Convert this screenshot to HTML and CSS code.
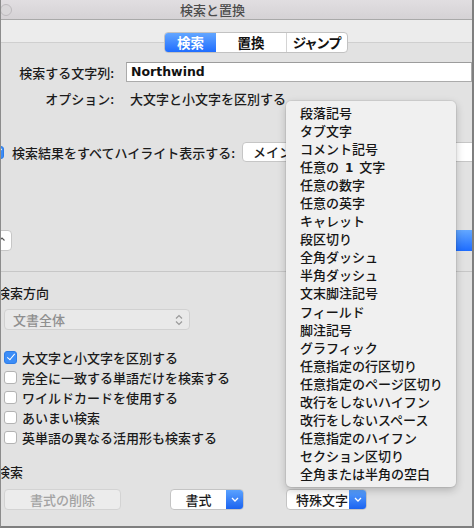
FILE: index.html
```html
<!DOCTYPE html>
<html lang="ja">
<head>
<meta charset="utf-8">
<title>検索と置換</title>
<link rel="stylesheet" href="styles.css">
</head>
<body>
<div class="window">
  <div class="titlebar">
    <span class="light"></span>
    <span class="title">検索と置換</span>
  </div>
  <div class="toolbar">
    <div class="seg">
      <span class="seg-item seg-find active">検索</span>
      <span class="seg-item seg-replace">置換</span>
      <span class="seg-item seg-jump">ジャンプ</span>
    </div>
  </div>
  <div class="content">
    <div class="row find-row">
      <span class="lbl">検索する文字列:</span>
      <div class="input">Northwind</div>
    </div>
    <div class="row opt-row">
      <span class="lbl">オプション:</span>
      <span class="opt-val">大文字と小文字を区別する</span>
    </div>
    <div class="row hl-row">
      <span class="cb checked cb-cut"></span>
      <span class="hl-text">検索結果をすべてハイライト表示する:</span>
      <div class="pop-btn">メイン文書</div>
    </div>
    <div class="row btn-row">
      <div class="small-btn"><svg width="6" height="4" viewBox="0 0 6 4"><path d="M0.5 3.5 L3 1 L5.5 3.5" fill="none" stroke="#555" stroke-width="1.1"/></svg></div>
      <div class="blue-btn"></div>
    </div>
    <div class="sep"></div>
    <div class="section-title">検索方向</div>
    <div class="select">
      <span>文書全体</span>
      <svg class="updown" width="8" height="12" viewBox="0 0 8 12"><path d="M1 4.5 L4 1.5 L7 4.5 M1 7.5 L4 10.5 L7 7.5" fill="none" stroke="#9a9a9a" stroke-width="1.2"/></svg>
    </div>
    <div class="checks">
      <div class="check-row"><span class="cb checked"></span><span>大文字と小文字を区別する</span></div>
      <div class="check-row"><span class="cb"></span><span>完全に一致する単語だけを検索する</span></div>
      <div class="check-row"><span class="cb"></span><span>ワイルドカードを使用する</span></div>
      <div class="check-row"><span class="cb"></span><span>あいまい検索</span></div>
      <div class="check-row"><span class="cb"></span><span>英単語の異なる活用形も検索する</span></div>
    </div>
    <div class="section-title section-search">検索</div>
    <div class="row bottom-row">
      <div class="btn disabled clear-btn">書式の削除</div>
      <div class="btn drop format-btn"><span class="btn-label">書式</span><span class="drop-arrow"><svg width="8" height="5" viewBox="0 0 8 5"><path d="M1 1 L4 4 L7 1" fill="none" stroke="#fff" stroke-width="1.3"/></svg></span></div>
      <div class="btn drop special-btn"><span class="btn-label">特殊文字</span><span class="drop-arrow"><svg width="8" height="5" viewBox="0 0 8 5"><path d="M1 1 L4 4 L7 1" fill="none" stroke="#fff" stroke-width="1.3"/></svg></span></div>
    </div>
  </div>
  <ul class="menu">
    <li>段落記号</li>
    <li>タブ文字</li>
    <li>コメント記号</li>
    <li>任意の <b class="num">1</b> 文字</li>
    <li>任意の数字</li>
    <li>任意の英字</li>
    <li>キャレット</li>
    <li>段区切り</li>
    <li>全角ダッシュ</li>
    <li>半角ダッシュ</li>
    <li>文末脚注記号</li>
    <li>フィールド</li>
    <li>脚注記号</li>
    <li>グラフィック</li>
    <li>任意指定の行区切り</li>
    <li>任意指定のページ区切り</li>
    <li>改行をしないハイフン</li>
    <li>改行をしないスペース</li>
    <li>任意指定のハイフン</li>
    <li>セクション区切り</li>
    <li>全角または半角の空白</li>
  </ul>
</div>
</body>
</html>
```
FILE: styles.css
```css
* { box-sizing: border-box; margin: 0; padding: 0; }
html, body { width: 474px; height: 528px; overflow: hidden; }
body {
  margin: 0;
  font-family: "Noto Sans CJK JP", "Noto Sans", sans-serif;
  font-size: 13px;
  font-weight: 500;
  color: #1b1b1b;
  background: #e2e2e2;
}
.window {
  position: relative;
  width: 474px;
  height: 528px;
  background: #e2e2e2;
  border-left: 1px solid #8c8c8c;
  border-right: 2px solid #7f7f7f;
  border-bottom: 2px solid #7f7f7f;
  overflow: hidden;
}
.titlebar {
  height: 20px;
  border-bottom: 1px solid #a9a9a9;
  background: linear-gradient(#e1dee1, #d5d2d5);
  display: flex;
  align-items: center;
}
.light {
  width: 12px;
  height: 12px;
  margin-left: -1px;
  border-radius: 50%;
  background: #d9d7d9;
  border: 1px solid #bdbabd;
}
.title {
  margin-left: 168px;
  color: #4b4b4b;
  line-height: 19px;
}
.toolbar {
  height: 23px;
  padding-top: 12px;
  background: #ececec;
  border-bottom: 1px solid #cfcfcf;
}
.seg {
  position: relative;
  z-index: 1;
  display: flex;
  margin-left: 163px;
  width: 184px;
  height: 21px;
  background: #fff;
  border: 1px solid #c2c2c2;
  border-radius: 4px;
  overflow: hidden;
}
.seg-item {
  display: flex;
  align-items: center;
  justify-content: center;
  font-weight: 700;
  font-size: 13.5px;
  color: #111;
  line-height: 19px;
}
.seg-find { width: 51px; }
.seg-replace { width: 71px; border-right: 1px solid #d4d4d4; }
.seg-jump { width: 60px; font-feature-settings: "palt"; }
.seg-item.active {
  color: #fff;
  background: linear-gradient(#63a6ff, #1f6dff);
}
.row { display: flex; align-items: center; }
.find-row { margin-top: 19px; height: 20px; }
.lbl { width: 113px; text-align: right; flex: none; }
.input {
  margin-left: 12px;
  width: 360px;
  height: 20px;
  background: #fff;
  border: 1px solid #ababab;
  border-top-color: #9c9c9c;
  padding-left: 4px;
  font-family: "DejaVu Sans", sans-serif;
  font-weight: 700;
  font-size: 12.5px;
  line-height: 18px;
  color: #111;
}
.opt-row { margin-top: 7px; height: 18px; }
.opt-val { margin-left: 16px; }
.hl-row { margin-top: 35px; height: 20px; }
.cb {
  flex: none;
  width: 13px;
  height: 13px;
  border-radius: 3px;
  background: #fff;
  border: 1px solid #b3b3b3;
  position: relative;
}
.cb.checked {
  background: #3c8df7;
  border-color: #2f7de6;
}
.cb.checked::after {
  content: "";
  position: absolute;
  left: 3.5px;
  top: 0.5px;
  width: 3px;
  height: 7px;
  border: solid #fff;
  border-width: 0 1.6px 1.6px 0;
  transform: rotate(40deg);
}
.cb-cut { margin-left: -10px; }
.hl-text { margin-left: 8px; flex: 0 0 230px; white-space: nowrap; }
.pop-btn {
  flex: none;
  width: 260px;
  height: 20px;
  background: #fff;
  border: 1px solid #c6c6c6;
  border-radius: 4px;
  padding-left: 10px;
  line-height: 18px;
  white-space: nowrap;
}
.btn-row { margin-top: 68px; height: 21px; }
.small-btn {
  flex: none;
  width: 24px;
  height: 21px;
  margin-left: -13px;
  background: #fff;
  border: 1px solid #c6c6c6;
  border-radius: 4px;
  display: flex;
  align-items: center;
  justify-content: flex-end;
  padding: 0 6px 3px 0;
}
.blue-btn {
  flex: none;
  margin-left: auto;
  margin-right: -30px;
  width: 110px;
  height: 21px;
  border-radius: 4px;
  background: linear-gradient(#64a8ff, #1d6cff);
}
.sep { margin-top: 20px; height: 1px; background: #c7c7c7; }
.section-title { margin-top: 12px; margin-left: -4px; line-height: 18px; }
.select {
  margin-top: 7px;
  margin-left: 3px;
  width: 186px;
  height: 21px;
  background: #e9e9e9;
  border: 1px solid #d1d1d1;
  border-radius: 4px;
  display: flex;
  align-items: center;
  justify-content: space-between;
  padding: 0 6px 0 8px;
  color: #8f8f8f;
}
.updown { flex: none; }
.checks { margin-top: 17px; }
.check-row {
  height: 20px;
  display: flex;
  align-items: center;
}
.check-row .cb { margin-left: 3px; margin-right: 5px; }
.section-search { margin-top: 16px; }
.bottom-row { margin-top: 8px; height: 21px; }
.btn {
  flex: none;
  height: 21px;
  border-radius: 4px;
  background: #fff;
  border: 1px solid #c4c4c4;
  display: flex;
  align-items: center;
  overflow: hidden;
}
.btn.disabled {
  background: #ececec;
  border-color: #d3d3d3;
  color: #a3a3a3;
  justify-content: center;
}
.clear-btn { margin-left: 3px; width: 117px; }
.format-btn { margin-left: 49px; width: 74px; }
.special-btn { margin-left: 42px; width: 81px; }
.btn-label { flex: 1; text-align: center; }
.special-btn .btn-label { text-align: left; padding-left: 9px; }
.drop-arrow {
  flex: none;
  width: 17px;
  height: 100%;
  display: flex;
  align-items: center;
  justify-content: center;
  background: linear-gradient(#5aa2ff, #1b63f0);
}
.menu {
  position: absolute;
  left: 285px;
  top: 101px;
  width: 170px;
  height: 386px;
  list-style: none;
  background: #f0f0f0;
  border-radius: 5px;
  box-shadow: 0 3px 9px rgba(0,0,0,0.22), 0 0 0 1px rgba(0,0,0,0.06);
  padding: 3px 0 0 14px;
}
.menu li {
  height: 18.05px;
  line-height: 18px;
  white-space: nowrap;
  color: #161616;
}
.menu .num {
  font-family: "DejaVu Sans", sans-serif;
  font-weight: 700;
  font-size: 12px;
  margin: 0 3px;
}
```
